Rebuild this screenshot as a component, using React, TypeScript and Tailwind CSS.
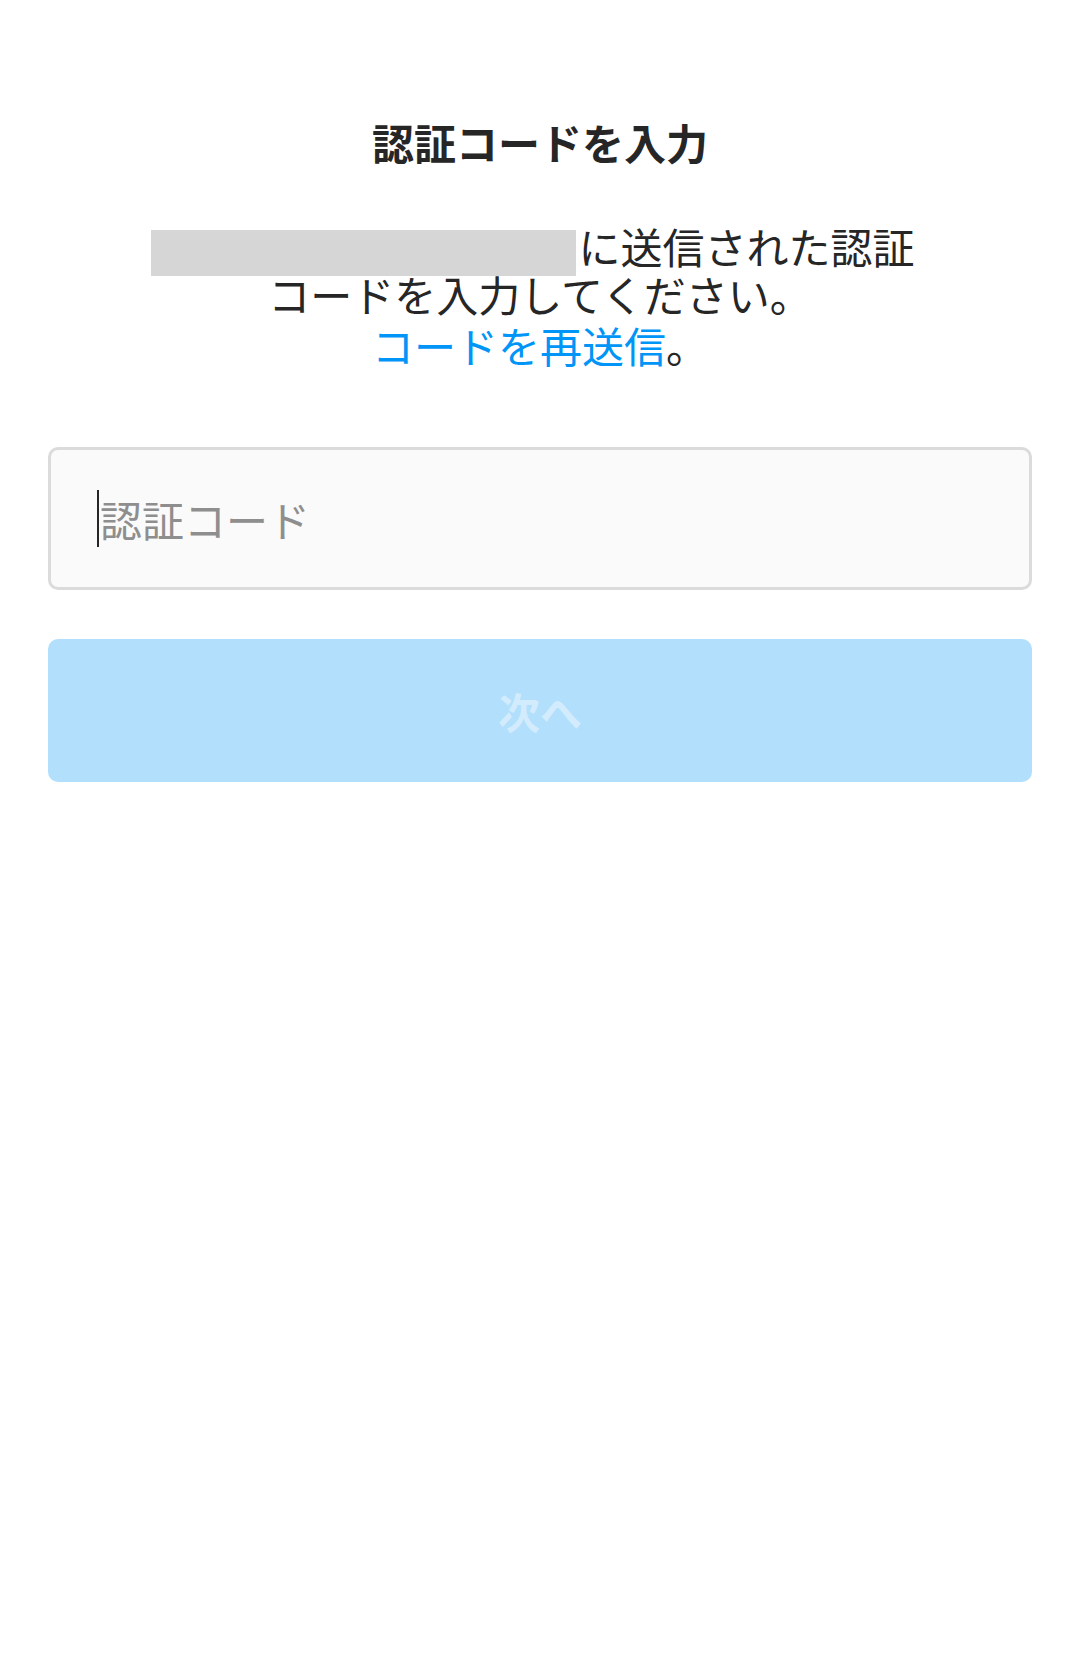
import React from "react";

export default function App() {
  return (
    <div
      className="min-h-[1663px] w-[1080px] bg-white px-12 pt-[117px] text-[#262626]"
      style={{ fontFamily: '"Noto Sans CJK JP", "Noto Sans", sans-serif' }}
    >
      <h1 className="text-center text-[42px] font-bold leading-[50px]">認証コードを入力</h1>

      <div className="mt-[55px] text-center text-[42px] leading-[48px]">
        <p className="pr-[14px]">
          <span className="-my-[6px] mr-[2px] inline-block h-[46px] w-[425px] bg-[#d6d6d6] align-middle" />
          に送信された認証
        </p>
        <p>コードを入力してください。</p>
        <p className="pt-[3px]">
          <span className="text-[#0095f6]">コードを再送信</span>。
        </p>
      </div>

      <div className="mt-[78px] flex h-[143px] items-center rounded-[10px] border-[3px] border-[#dbdbdb] bg-[#fafafa] pl-[46px]">
        <span className="h-[57px] w-[2px] bg-[#262626]" />
        <span className="ml-[1px] text-[42px] leading-none text-[#8e8e8e]">認証コード</span>
      </div>

      <button className="mt-[49px] flex h-[143px] w-full items-center justify-center rounded-[10px] bg-[#b2dffc] text-[42px] font-bold text-[#d3ecfd]">
        次へ
      </button>
    </div>
  );
}
